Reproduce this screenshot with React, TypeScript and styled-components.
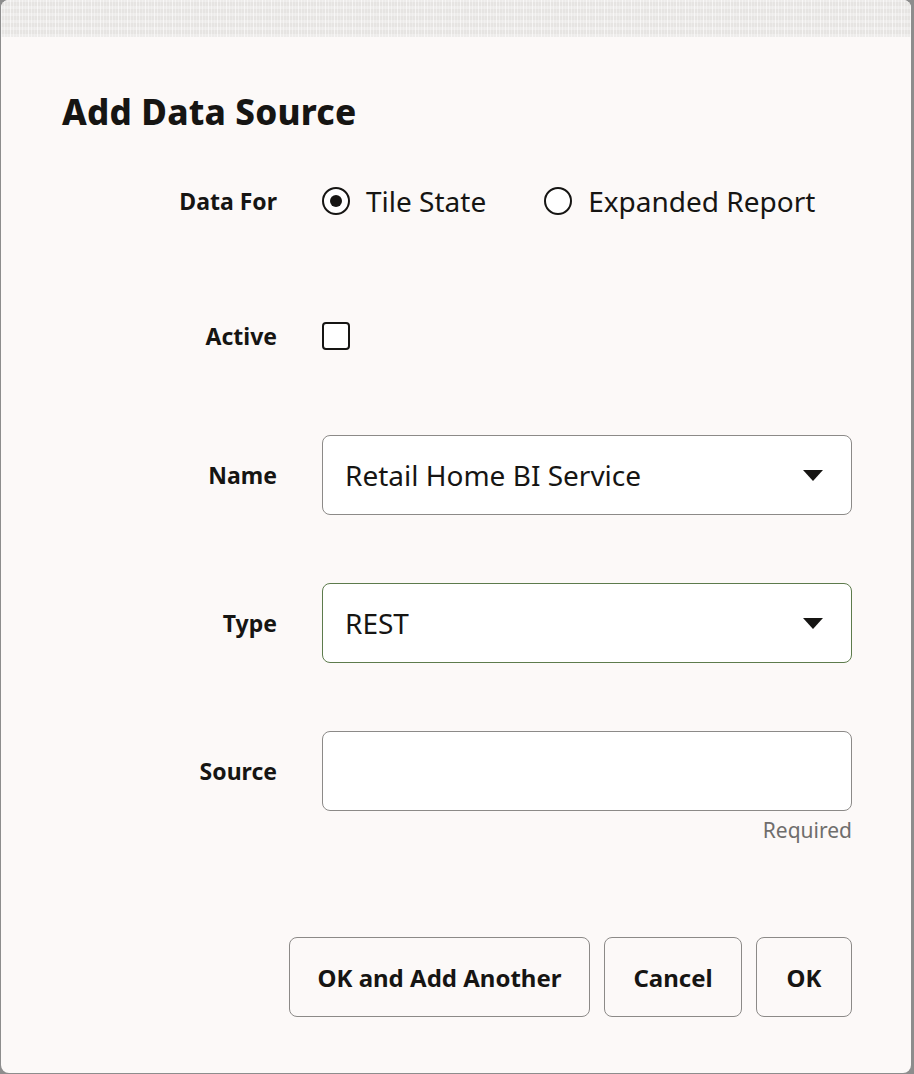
import React, { useState } from 'react';
import styled, { createGlobalStyle } from 'styled-components';

const GlobalStyle = createGlobalStyle`
  html, body {
    margin: 0;
    padding: 0;
    background: #8d8d8d;
  }
  body {
    font-family: 'Noto Sans', 'Liberation Sans', sans-serif;
    color: #161513;
  }
`;

const Backdrop = styled.div`
  padding: 0 3px 0 1px;
  height: 1074px;
  box-sizing: border-box;
`;

const Dialog = styled.div`
  height: 1073px;
  background: #fcf9f8;
  border-radius: 8px;
  overflow: hidden;
  display: flex;
  flex-direction: column;
`;

const HeaderStrip = styled.div`
  height: 37px;
  flex: none;
  background-color: #e6e4e2;
  background-image: repeating-linear-gradient(
      90deg,
      rgba(255, 255, 255, 0.6) 0 1px,
      transparent 1px 3px,
      rgba(255, 255, 255, 0.4) 3px 4px,
      transparent 4px 6px,
      rgba(255, 255, 255, 0.25) 6px 7px,
      transparent 7px 9px
    ),
    repeating-linear-gradient(
      0deg,
      rgba(255, 255, 255, 0.3) 0 3px,
      transparent 3px 7px
    );
`;

const Body = styled.div`
  padding: 55px 59px 0 61px;
`;

const Title = styled.h1`
  margin: 0;
  font-size: 35px;
  line-height: 40px;
  font-weight: 800;
  letter-spacing: 0.2px;
`;

const Row = styled.div<{ $top: number; $height?: number }>`
  display: grid;
  grid-template-columns: 215px 1fr;
  column-gap: 45px;
  align-items: center;
  margin-top: ${({ $top }) => $top}px;
  min-height: ${({ $height }) => $height ?? 48}px;
`;

const Label = styled.div`
  text-align: right;
  font-size: 23px;
  font-weight: 700;
`;

const RadioGroup = styled.div`
  display: flex;
  align-items: center;
  gap: 58px;
`;

const RadioOption = styled.label`
  display: flex;
  align-items: center;
  gap: 16px;
  font-size: 28px;
  cursor: pointer;
`;

const RadioCircle = styled.span<{ $checked: boolean }>`
  width: 28px;
  height: 28px;
  box-sizing: border-box;
  border: 2px solid #161513;
  border-radius: 50%;
  display: flex;
  align-items: center;
  justify-content: center;
  background: #fff;
  &::after {
    content: '';
    width: 12px;
    height: 12px;
    border-radius: 50%;
    background: ${({ $checked }) => ($checked ? '#161513' : 'transparent')};
  }
`;

const Checkbox = styled.span`
  display: block;
  width: 28px;
  height: 28px;
  box-sizing: border-box;
  border: 2px solid #161513;
  border-radius: 4px;
  background: #fff;
`;

const Field = styled.div<{ $accent?: boolean }>`
  height: 80px;
  box-sizing: border-box;
  border: 1px solid ${({ $accent }) => ($accent ? '#5d7b4c' : '#8c8a88')};
  border-radius: 8px;
  background: #fff;
  display: flex;
  align-items: center;
  padding: 0 28px 0 22px;
  font-size: 28px;
`;

const FieldText = styled.span`
  flex: 1;
`;

const Caret = styled.svg`
  width: 20px;
  height: 11px;
  flex: none;
`;

const Helper = styled.div`
  grid-column: 2;
  text-align: right;
  margin-top: 8px;
  font-size: 21px;
  line-height: 22px;
  color: #6f6e6c;
`;

const Buttons = styled.div`
  display: flex;
  justify-content: flex-end;
  gap: 14px;
  margin-top: 96px;
`;

const Button = styled.button<{ $w: number }>`
  all: unset;
  box-sizing: border-box;
  width: ${({ $w }) => $w}px;
  height: 80px;
  border: 1px solid #8c8a88;
  border-radius: 8px;
  background: #fcf9f8;
  font-family: 'Noto Sans', 'Liberation Sans', sans-serif;
  font-size: 24px;
  font-weight: 700;
  color: #161513;
  text-align: center;
  cursor: pointer;
`;

function DownCaret() {
  return (
    <Caret viewBox="0 0 20 11">
      <path d="M0 0 L20 0 L10 11 Z" fill="#161513" />
    </Caret>
  );
}

export default function App() {
  const [dataFor, setDataFor] = useState('tile');

  return (
    <Backdrop>
      <GlobalStyle />
      <Dialog>
        <HeaderStrip />
        <Body>
          <Title>Add Data Source</Title>

          <Row $top={45}>
            <Label>Data For</Label>
            <RadioGroup>
              <RadioOption onClick={() => setDataFor('tile')}>
                <RadioCircle $checked={dataFor === 'tile'} />
                Tile State
              </RadioOption>
              <RadioOption onClick={() => setDataFor('expanded')}>
                <RadioCircle $checked={dataFor === 'expanded'} />
                Expanded Report
              </RadioOption>
            </RadioGroup>
          </Row>

          <Row $top={87}>
            <Label>Active</Label>
            <div>
              <Checkbox />
            </div>
          </Row>

          <Row $top={75} $height={80}>
            <Label>Name</Label>
            <Field>
              <FieldText>Retail Home BI Service</FieldText>
              <DownCaret />
            </Field>
          </Row>

          <Row $top={68} $height={80}>
            <Label>Type</Label>
            <Field $accent>
              <FieldText>REST</FieldText>
              <DownCaret />
            </Field>
          </Row>

          <Row $top={68} $height={80}>
            <Label>Source</Label>
            <Field />
            <Helper>Required</Helper>
          </Row>

          <Buttons>
            <Button $w={301}>OK and Add Another</Button>
            <Button $w={138}>Cancel</Button>
            <Button $w={96}>OK</Button>
          </Buttons>
        </Body>
      </Dialog>
    </Backdrop>
  );
}
